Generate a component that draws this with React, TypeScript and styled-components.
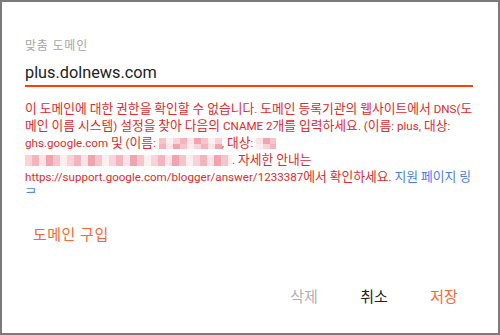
import React from "react";
import styled, { createGlobalStyle } from "styled-components";

const Global = createGlobalStyle`
  html, body { margin: 0; padding: 0; background: #fff; }
  body { font-family: Roboto, "Noto Sans CJK KR", sans-serif; }
`;

const Dialog = styled.div`
  box-sizing: border-box;
  width: 500px;
  height: 335px;
  border: 2px solid #7b7b7b;
  background: #fff;
  display: flex;
  flex-direction: column;
  padding: 0 19px 0 23px;
  overflow: hidden;
`;

const Label = styled.div`
  margin-top: 36px;
  font-size: 12px;
  line-height: 16px;
  color: #a6a6a6;
  letter-spacing: 0.8px;
`;

const Input = styled.div`
  margin-top: 7px;
  margin-right: 6px;
  font-size: 16.3px;
  line-height: 24px;
  color: #212121;
  border-bottom: 2px solid #ff3d00;
`;

const ErrorText = styled.div`
  margin-top: 14px;
  font-size: 11.6px;
  line-height: 17px;
  color: #e8262a;
  height: 92px;
  overflow: hidden;
`;

const Ko = styled.span`
  font-size: 12.8px;
  line-height: 1;
`;

const Link = styled.span`
  color: #4a7df0;
`;

const MosaicBox = styled.span<{ $w: number }>`
  display: inline-block;
  width: ${(p) => p.$w}px;
  height: 11px;
  overflow: hidden;
  vertical-align: -2px;
`;

const Cells = styled.span`
  display: flex;
  flex-wrap: wrap;
`;

const Cell = styled.span<{ $c: string }>`
  display: block;
  width: 7px;
  height: 5.5px;
  background: ${(p) => p.$c};
`;

const shades = ["#f9d3d9", "#f4b3bd", "#fbe3e7", "#f1a3b0", "#f7c4cc", "#fdeef0"];

const Mosaic = ({ w, seed }: { w: number; seed: number }) => {
  const cols = Math.ceil(w / 7);
  const cells = [];
  let s = seed;
  for (let i = 0; i < cols * 2; i++) {
    s = (s * 9301 + 49297) % 233280;
    cells.push(<Cell key={i} $c={shades[s % shades.length]} />);
  }
  return (
    <MosaicBox $w={w}>
      <Cells style={{ width: cols * 7 }}>{cells}</Cells>
    </MosaicBox>
  );
};

// Hangul runs are set a little larger, as the reference's Korean face is
const ko = (text: string) =>
  text.split(/([\uAC00-\uD7A3]+)/).map((part, i) =>
    /[\uAC00-\uD7A3]/.test(part) ? <Ko key={i}>{part}</Ko> : part
  );

const Buy = styled.button`
  align-self: flex-start;
  margin-top: 31px;
  margin-left: 0;
  padding: 0 8px;
  border: none;
  background: none;
  font-family: inherit;
  font-size: 15px;
  line-height: 22px;
  letter-spacing: 0.5px;
  color: #ff6434;
`;

const Actions = styled.div`
  margin-top: auto;
  margin-bottom: 25px;
  display: flex;
  justify-content: flex-end;
`;

const Action = styled.button<{ $tone: "muted" | "plain" | "primary" }>`
  width: 70px;
  padding: 0;
  border: none;
  background: none;
  font-family: inherit;
  font-size: 15px;
  line-height: 22px;
  color: ${(p) => (p.$tone === "muted" ? "#b0b0b0" : p.$tone === "primary" ? "#ff6434" : "#222")};
`;

export default function App() {
  return (
    <>
      <Global />
      <Dialog>
        <Label>맞춤 도메인</Label>
        <Input>plus.dolnews.com</Input>
        <ErrorText>
          {ko("이 도메인에 대한 권한을 확인할 수 없습니다. 도메인 등록기관의 웹사이트에서 DNS(도메인 이름 시스템) 설정을 찾아 다음의 CNAME 2개를 입력하세요. (이름: plus, 대상: ghs.google.com 및 (이름: ")}
          <Mosaic w={63} seed={3} />
          {ko(", 대상: ")}
          <Mosaic w={20} seed={7} />
          <Mosaic w={207} seed={11} />
          {ko(". 자세한 안내는 https://support.google.com/blogger/answer/1233387에서 확인하세요. ")}
          <Link>{ko("지원 페이지 링크")}</Link>
        </ErrorText>
        <Buy>도메인 구입</Buy>
        <Actions>
          <Action $tone="muted">삭제</Action>
          <Action $tone="plain">취소</Action>
          <Action $tone="primary">저장</Action>
        </Actions>
      </Dialog>
    </>
  );
}
